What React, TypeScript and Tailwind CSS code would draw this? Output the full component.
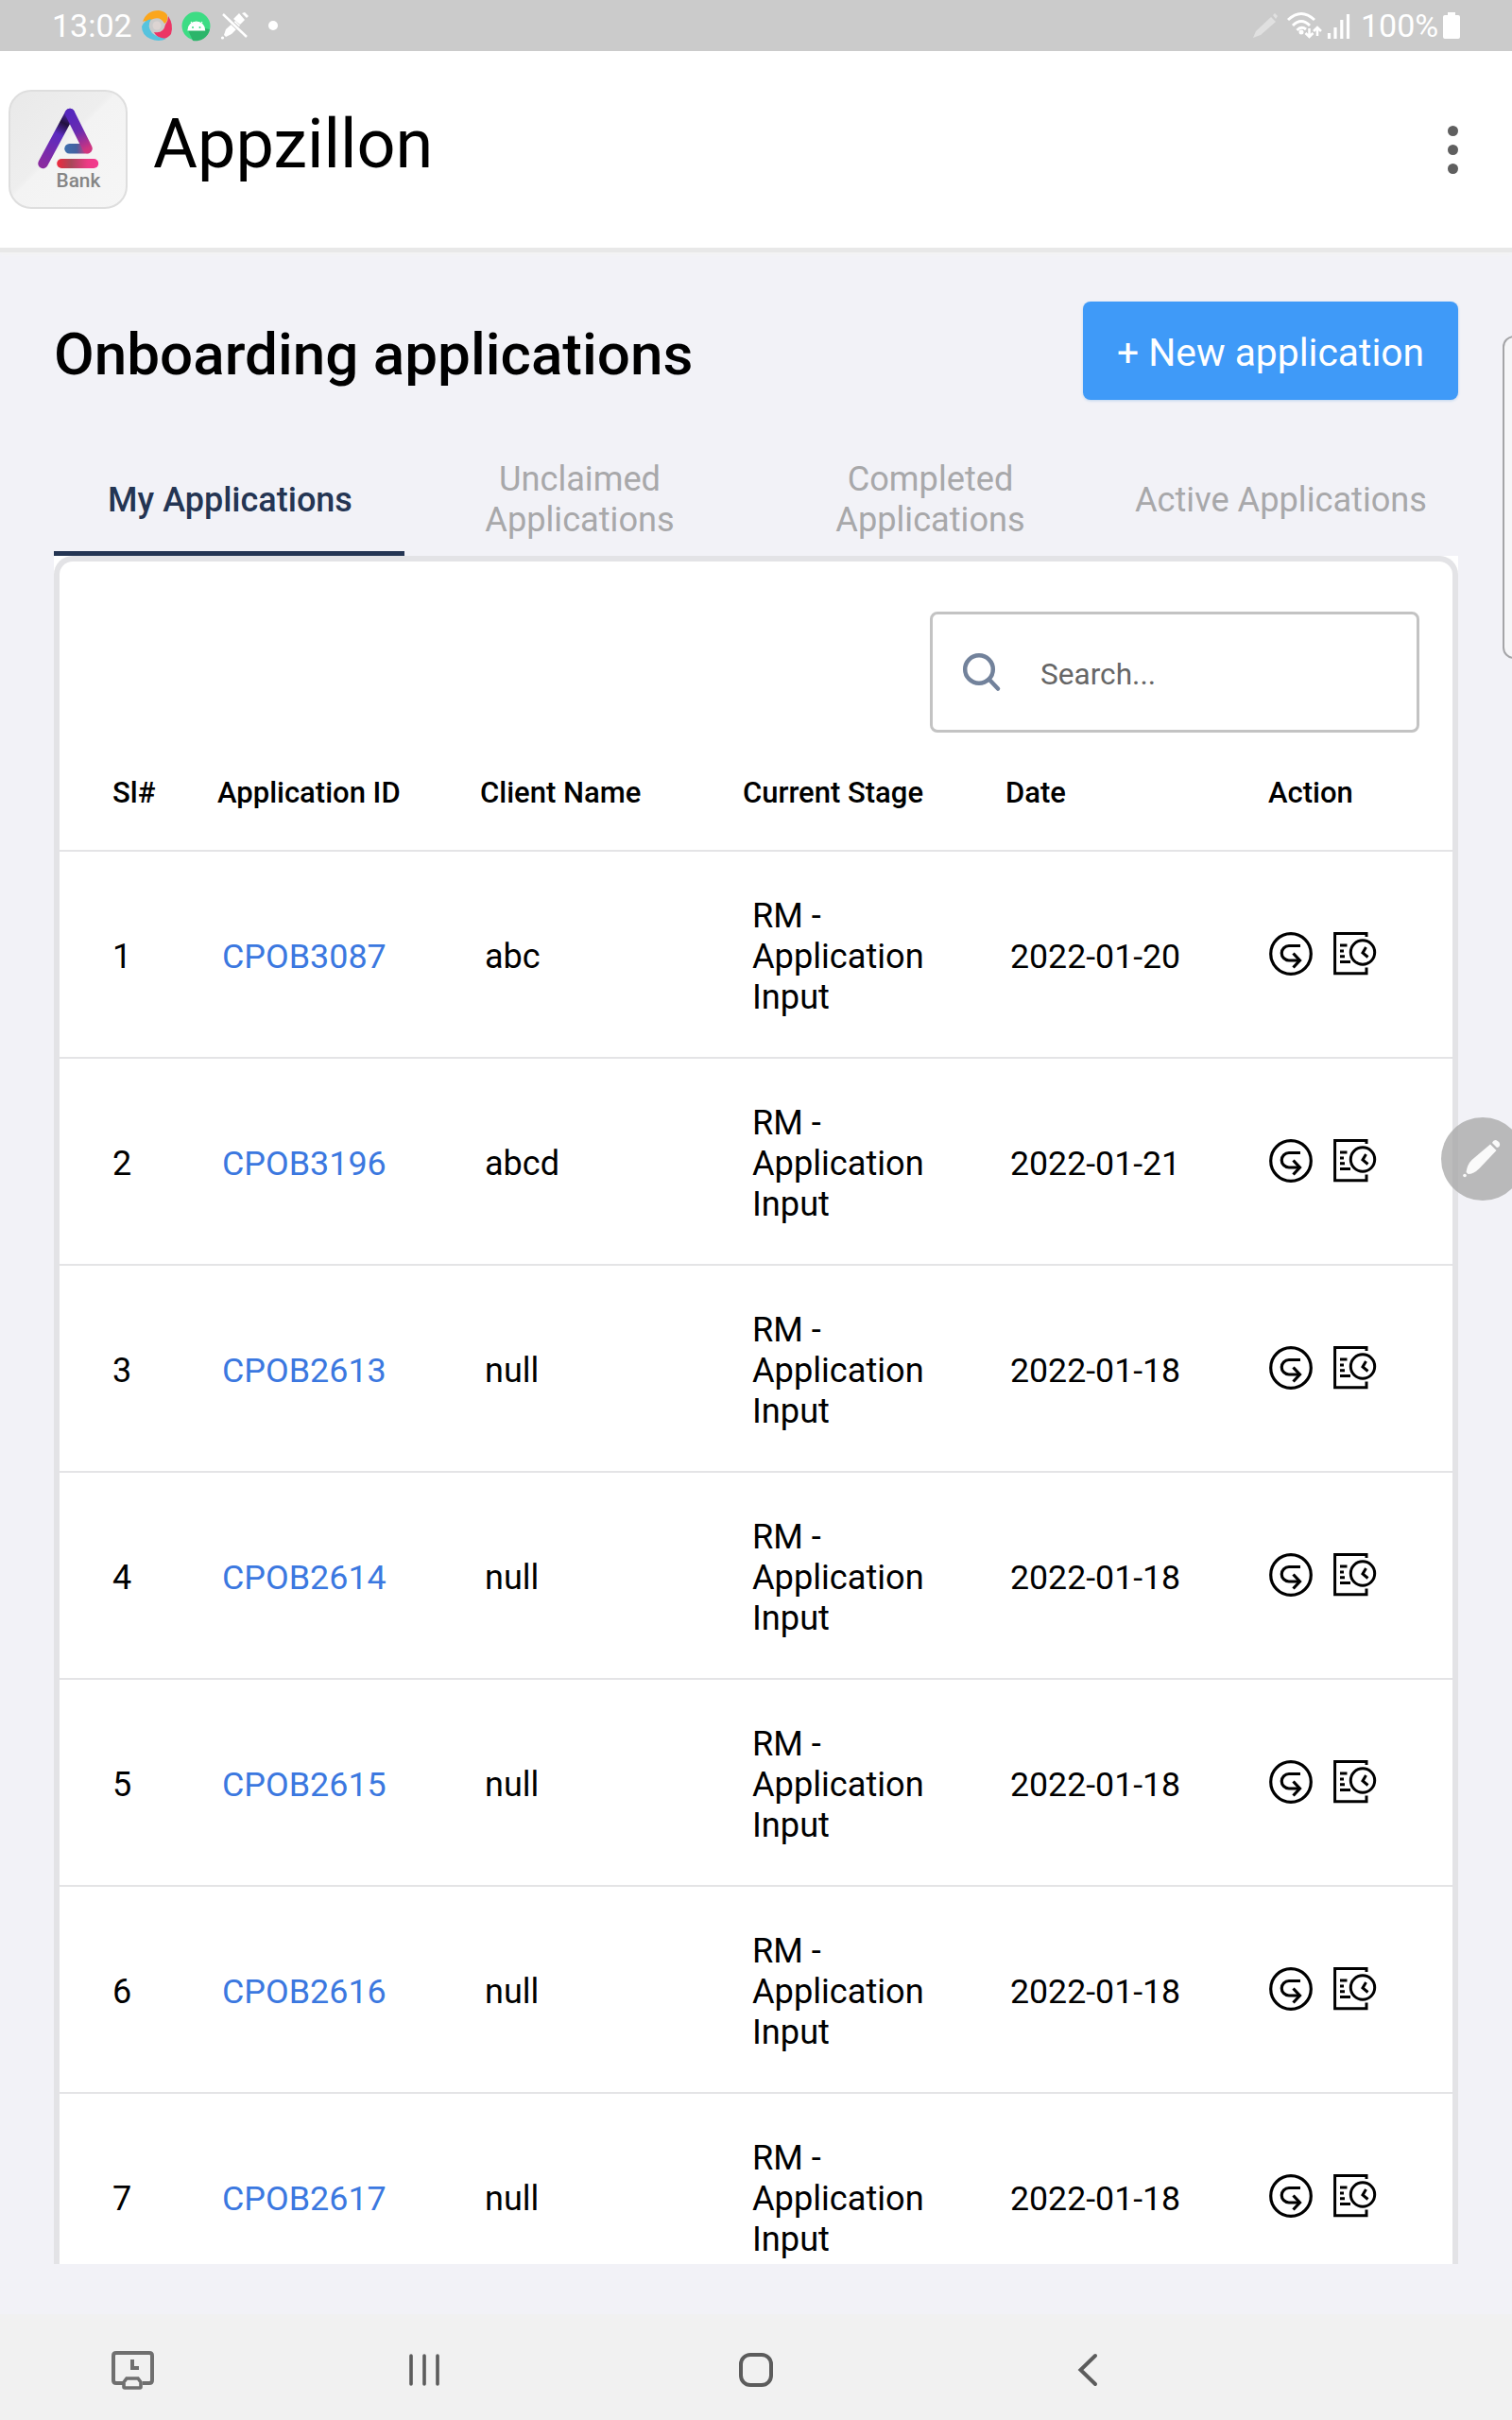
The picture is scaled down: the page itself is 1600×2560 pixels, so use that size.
import React from "react";

const rows = [
  { n: 1, id: "CPOB3087", client: "abc", date: "2022-01-20" },
  { n: 2, id: "CPOB3196", client: "abcd", date: "2022-01-21" },
  { n: 3, id: "CPOB2613", client: "null", date: "2022-01-18" },
  { n: 4, id: "CPOB2614", client: "null", date: "2022-01-18" },
  { n: 5, id: "CPOB2615", client: "null", date: "2022-01-18" },
  { n: 6, id: "CPOB2616", client: "null", date: "2022-01-18" },
  { n: 7, id: "CPOB2617", client: "null", date: "2022-01-18" },
];

function StatusBar() {
  return (
    <div className="flex h-[54px] shrink-0 items-center justify-between bg-[#cbcbcb] pl-[55px] pr-[54px] text-[34px] leading-[54px] text-white">
      <div className="flex h-full items-center">
        <span className="w-[93px]">13:02</span>
        <svg width="150" height="54" viewBox="148 0 150 54">
          <path d="M151 23Q155 11 168 11Q175 12 177 16Q178 23 174 25Q170 17 162 20Q157 22 157 25Q154 21 151 23Z" fill="#fba61c" />
          <path d="M178 17Q184 26 181 36Q177 41 172 41Q165 39 163 34Q173 36 175 26Q178 22 178 17Z" fill="#ec3565" />
          <path d="M150 28Q152 22 160 20Q155 28 161 35Q167 40 176 41Q168 45 159 41Q150 37 150 28Z" fill="#56c3de" />
          <circle cx="166" cy="27" r="4.500" fill="#dcd4d2" />
          <circle cx="207.500" cy="27.500" r="15" fill="#3ddc84" />
          <path d="M199 32L204 43A15 15 0 0 0 222 31L216 30Z" fill="#2cb56a" />
          <path d="M199 32a8.800 8.800 0 0 1 17.600 0ZM202 23l2 3M214 23l-2 3" fill="#fff" stroke="#fff" strokeWidth="1.200" />
          <circle cx="204" cy="29" r="1" fill="#3ddc84" />
          <circle cx="211.500" cy="29" r="1" fill="#3ddc84" />
          <path d="M237 37l2-6 10-9 5 5-9 9-6 3ZM247 20l6-6 6 7-5 5ZM256 14l3-1 4 4-2 2Z" fill="#fff" />
          <circle cx="235.500" cy="40" r="1.600" fill="#fff" />
          <path d="M236 15l25 24" stroke="#cbcbcb" strokeWidth="4.500" />
          <path d="M236 15l25 24" stroke="#fff" strokeWidth="2.500" />
          <circle cx="289" cy="27" r="5" fill="#fff" />
        </svg>
      </div>
      <div className="flex h-full items-center">
        <svg width="118" height="54" viewBox="1322 0 118 54">
          <path d="M1326 40l3-7 16-15 5 5-16 14ZM1347 16l2-2 3 3-2 3Z" fill="#e0e0e0" />
          <path d="M1363 21q14-13 28 0M1368 27q9-9 18 0M1372.500 32q4.500-5 9.500-1" fill="none" stroke="#fff" strokeWidth="3" />
          <circle cx="1377" cy="34" r="2.500" fill="#fff" />
          <path d="M1385.500 30v8M1381.500 35l4 4 4-4M1394 38v-7M1390 33l4-4 4 4" fill="none" stroke="#fff" strokeWidth="2.500" />
          <path d="M1406.500 35v6M1413 29v12M1419.800 21v20M1426.500 15v26" stroke="#fff" strokeWidth="3.200" />
        </svg>
        <span className="w-[82px]">100%</span>
        <svg width="24" height="54" viewBox="1522 0 24 54">
          <path d="M1532 13h8v3h3q2 0 2 2v21q0 2-2 2h-14q-2 0-2-2v-21q0-2 2-2h3Z" fill="#fff" />
        </svg>
      </div>
    </div>
  );
}

function Logo() {
  return (
    <svg width="126" height="126" viewBox="9 95 126 126">
      <defs>
        <linearGradient id="tile" x1="0" y1="0" x2="1" y2="1">
          <stop offset="0" stopColor="#e9e9e9" />
          <stop offset="0.440" stopColor="#eeeeee" />
          <stop offset="0.470" stopColor="#f3f3f3" />
          <stop offset="1" stopColor="#f6f6f6" />
        </linearGradient>
        <linearGradient id="left" gradientUnits="userSpaceOnUse" x1="74" y1="120" x2="45" y2="173">
          <stop offset="0" stopColor="#5a28b8" />
          <stop offset="0.100" stopColor="#3a1c78" />
          <stop offset="0.200" stopColor="#21103d" />
          <stop offset="0.420" stopColor="#5b2bc0" />
          <stop offset="1" stopColor="#8a2ba0" />
        </linearGradient>
        <linearGradient id="right" gradientUnits="userSpaceOnUse" x1="74" y1="120" x2="92" y2="158">
          <stop offset="0" stopColor="#5527bd" />
          <stop offset="0.500" stopColor="#6a2bb0" />
          <stop offset="1" stopColor="#d0357f" />
        </linearGradient>
        <linearGradient id="bar" gradientUnits="userSpaceOnUse" x1="68" y1="157" x2="97" y2="157">
          <stop offset="0" stopColor="#3c6fae" />
          <stop offset="0.450" stopColor="#46609f" />
          <stop offset="0.800" stopColor="#c63f83" />
          <stop offset="1" stopColor="#c9388a" />
        </linearGradient>
        <linearGradient id="base" gradientUnits="userSpaceOnUse" x1="60" y1="173" x2="104" y2="173">
          <stop offset="0" stopColor="#f0283c" />
          <stop offset="0.350" stopColor="#a8485a" />
          <stop offset="0.750" stopColor="#ee3a85" />
          <stop offset="1" stopColor="#f23a90" />
        </linearGradient>
      </defs>
      <rect x="10" y="96" width="124" height="124" rx="23" fill="url(#tile)" stroke="#dedede" strokeWidth="2" />
      <g fill="none" strokeLinecap="round" strokeWidth="10.500">
        <path d="M74 120L45.500 173" stroke="url(#left)" />
        <path d="M73.500 157.300h18.500" stroke="url(#bar)" />
        <path d="M74 120L92.500 157" stroke="url(#right)" />
        <path d="M65.200 173h34" stroke="url(#base)" strokeWidth="10" />
      </g>
      <text x="59.500" y="198" fontSize="20.800" fontWeight="500" fill="#858585" fontFamily="Roboto, sans-serif">Bank</text>
    </svg>
  );
}

function Header() {
  return (
    <header className="flex h-[213px] shrink-0 items-start border-b-[5px] border-[#e8e8e8] bg-white pl-[9px] pr-[57px] shadow-[0_3px_3px_#f3f3f4]">
      <div className="mt-[41px]"><Logo /></div>
      <h1 className="ml-[27px] mt-[57px] text-[72px] leading-[84px] text-black">Appzillon</h1>
      <div className="ml-auto mt-[79px] flex flex-col gap-[9px]">
        <i className="size-[11px] rounded-full bg-[#5f5f5f]" />
        <i className="size-[11px] rounded-full bg-[#5f5f5f]" />
        <i className="size-[11px] rounded-full bg-[#5f5f5f]" />
      </div>
    </header>
  );
}

function Tabs() {
  const tab = "flex w-[371px] items-center justify-center px-8 text-center text-[#a8a8aa]";
  return (
    <nav className="flex h-[126px] text-[36px] leading-[43px]">
      <div className="flex w-[371px] items-center justify-center border-b-[5px] border-[#243553] pl-[2px] pt-[13px] font-medium text-[#243553]"><span>My Applications</span></div>
      <div className={tab}><span className="mt-1.5 text-[36.200px]">Unclaimed<br />Applications</span></div>
      <div className={tab}><span className="mt-1.5 text-[36.200px]">Completed<br />Applications</span></div>
      <div className="flex w-[371px] items-center justify-center text-[#a8a8aa]"><span className="mt-1.5 whitespace-nowrap text-[36.200px]">Active Applications</span></div>
    </nav>
  );
}

function ResumeIcon() {
  return (
    <svg width="46" height="46" viewBox="0 0 46 46" fill="none" stroke="#000" strokeWidth="3.200">
      <circle cx="23" cy="23" r="21.300" />
      <path d="M33 14.500H21A7.750 7.750 0 0 0 21 30H32" />
      <path d="M25.500 22.500L32.500 30L25.500 37.500" />
    </svg>
  );
}

function HistoryIcon() {
  return (
    <svg width="46" height="46" viewBox="0 0 46 46" fill="none" stroke="#000" strokeWidth="3">
      <path d="M35 5V1.600H1.600V43.800H35V37.500" />
      <circle cx="31" cy="21.500" r="12.700" />
      <path d="M34.500 16L31 22L36.500 26.500M7 14h7.500M7 20h4M7 25.700h5M7 31.600h11" />
    </svg>
  );
}

const columns = "grid grid-cols-[111px_278px_278px_278px_278px_1fr] pl-14";

function Table() {
  return (
    <div className="text-black">
      <div className={columns + " h-[81px] border-b-2 border-[#e4e4e6] pt-px text-[31px] leading-[36px] font-medium"}>
        <span>Sl#</span>
        <span>Application ID</span>
        <span>Client Name</span>
        <span>Current Stage</span>
        <span>Date</span>
        <span>Action</span>
      </div>
      {rows.map((r) => (
        <div key={r.n} className={columns + " h-[219px] items-center border-b-2 border-[#e4e4e6] pt-[6px] text-[36px] leading-[43px]"}>
          <span>{r.n}</span>
          <span className="pl-[5px] text-[35.900px] text-[#3b78e0]">{r.id}</span>
          <span className="pl-[5px]">{r.client}</span>
          <span className="mb-[2px] pl-[10px] text-[36.200px]">RM -<br />Application<br />Input</span>
          <span className="pl-[5px] text-[35.700px]">{r.date}</span>
          <div className="mb-[7px] flex gap-[22px] pl-px"><ResumeIcon /><HistoryIcon /></div>
        </div>
      ))}
    </div>
  );
}

function NavBar() {
  return (
    <footer className="grid h-28 shrink-0 items-center bg-[#f1f1f1] grid-cols-[280px_337px_366px_335px_1fr] pt-1.5">
      <svg className="justify-self-center" width="46" height="42" viewBox="117 2485 46 42" fill="none" stroke="#6f6f6f" strokeWidth="4">
        <path d="M130 2520h-7q-3 0-3-3v-26q0-3 3-3h35q3 0 3 3v26q0 3-3 3h-7" />
        <path d="M134 2515h12l3 4v5q0 1-1 1h-16q-1 0-1-1v-5Z" strokeWidth="3.600" />
        <path d="M140 2495v9h7" />
      </svg>
      <svg className="justify-self-center" width="34" height="36" viewBox="432 2489 34 36" stroke="#5c5c5c" strokeWidth="3.600" strokeLinecap="round">
        <path d="M435 2492v30M449 2492v30M463 2492v30" />
      </svg>
      <div className="size-9 justify-self-center rounded-[12px] border-4 border-[#5c5c5c]" />
      <svg className="justify-self-center" width="22" height="36" viewBox="1139 2489 22 36" fill="none" stroke="#5c5c5c" strokeWidth="4" strokeLinecap="round">
        <path d="M1158 2492L1142.500 2507L1158 2522" />
      </svg>
    </footer>
  );
}

export default function App() {
  return (
    <div className="relative flex h-[2560px] w-[1600px] flex-col overflow-hidden bg-[#f2f2f7] font-['Roboto',sans-serif]">
      <StatusBar />
      <Header />
      <main className="flex min-h-0 flex-1 flex-col px-[57px] pb-[53px] pt-[52px]">
        <div className="flex h-[104px] items-center justify-between">
          <h2 className="mt-2 text-[62px] leading-[76px] font-medium text-black">Onboarding applications</h2>
          <button className="h-[104px] w-[397px] rounded-[8px] bg-[#3f9af8] pt-[3px] text-[40.800px] leading-[48px] text-white shadow-[0_1px_3px_#bcd4ee]">+ New application</button>
        </div>
        <div className="mt-[39px]"><Tabs /></div>
        <section className="min-h-0 flex-1 overflow-hidden bg-white">
          <div className="rounded-t-[20px] border-x-[6px] border-t-[6px] border-[#e3e3e6] pt-[53px]">
            <div className="mb-[45px] mr-[35px] ml-auto flex h-32 w-[518px] items-center rounded-[8px] border-[3px] border-[#c3c3c3] pl-[31px] text-[31.600px] text-[#666]">
              <svg width="42" height="42" viewBox="0 0 42 42" fill="none" stroke="#72829b" strokeWidth="4.500" strokeLinecap="round">
                <circle cx="18" cy="18" r="14.800" />
                <path d="M29 29L38 38.500" />
              </svg>
              <span className="ml-[41px] mt-1.5">Search...</span>
            </div>
            <Table />
          </div>
        </section>
      </main>
      <NavBar />
      <div className="absolute left-[1590px] top-[355px] h-[342px] w-8 rounded-[12px] border-2 border-[#a5a5a8] bg-[#f6f6f8]" />
      <div className="absolute left-[1525px] top-[1182px] size-[88px] rounded-full bg-[#a5a5a5]/75">
        <svg width="88" height="88" viewBox="1525 1182 88 88" fill="#fafafa">
          <path d="M1551.500 1240q1-8 6-13l19.500-16.500 6.500 6.500-18 19q-6 6-12 6Z" />
          <path d="M1579 1209q1-3 4-3q5 2 4 6q-1 2-3 2Z" />
          <circle cx="1550" cy="1243.500" r="1.800" />
        </svg>
      </div>
    </div>
  );
}
